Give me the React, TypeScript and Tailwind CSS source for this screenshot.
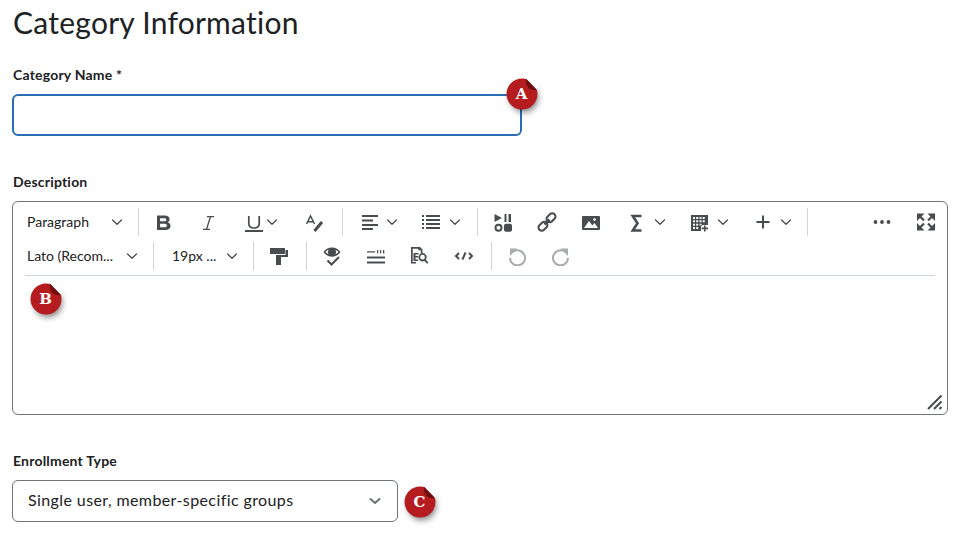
import React from "react";

const C = "#494c4e";
const G = "#a9acae";

function Chev({ className = "" }: { className?: string }) {
  return (
    <svg width="12" height="8" viewBox="0 0 12 8" className={"shrink-0 " + className} fill="none" stroke={C} strokeWidth="1.3" strokeLinecap="round" strokeLinejoin="round">
      <path d="M1.500 2 6 6.200 10.500 2" />
    </svg>
  );
}

function Sep({ className = "" }: { className?: string }) {
  return <div className={"w-px h-[28px] bg-[#cdd5dc] shrink-0 " + className} />;
}

function Ico({ children, className = "" }: { children: React.ReactNode; className?: string }) {
  return (
    <svg width="20" height="20" viewBox="0 0 20 20" className={"shrink-0 " + className} fill={C} stroke="none">
      {children}
    </svg>
  );
}

function Badge({ letter, className }: { letter: string; className: string }) {
  return (
    <div className={"absolute w-[32px] h-[32px] " + className}>
      <div className="absolute left-[4px] top-[6px] w-[28px] h-[28px] rounded-full bg-black/50 blur-[3px]" />
      <svg width="32" height="32" viewBox="0 0 32 32" className="absolute left-0 top-0">
        <circle cx="16" cy="16" r="15.500" fill="#b51c20" />
        <path d="M19.500 0H32v12.500L31 12 20 .8z" fill="#fff" />
        <path d="M20 .8 31 12c-3.500.6-7-.4-9-2.500S19.500 4 20 .8z" fill="#6f0d10" />
      </svg>
      <span className="absolute inset-0 flex items-center justify-center pr-[1px] text-white text-[15px] font-bold font-['DejaVu_Serif',serif] leading-none">{letter}</span>
    </div>
  );
}

export default function App() {
  return (
    <div className="relative w-[961px] h-[541px] overflow-hidden bg-white pl-[12px] font-['Lato',sans-serif] text-[#202122]">
      <h1 className="ml-[1px] pt-[2px] text-[30px] leading-[40px] font-normal tracking-[0.25px]">Category Information</h1>

      <label className="block ml-[1px] mt-[23px] text-[14px] leading-[20px] font-bold tracking-[0.2px]">Category Name *</label>
      <div className="mt-[9px] w-[510px] h-[42px] rounded-[6px] border-2 border-[#2a6db5] bg-white" />

      <label className="block ml-[1px] mt-[36px] text-[14px] leading-[20px] font-bold tracking-[0.2px]">Description</label>

      <div className="mt-[9px] w-[936px] h-[214px] rounded-[6px] border border-[#6e7477] bg-white flex flex-col">
        <div className="flex items-center h-[34px] mt-[3px] pl-[14px] shrink-0">
          <span className="text-[14px] w-[82px] pb-[2px]">Paragraph</span>
          <Chev className="ml-[2px]" />
          <Sep className="ml-[15px]" />
          <Ico className="ml-[15px]">
            <path fillRule="evenodd" d="M3 3.500h7.800c3 0 4.800 1.400 4.800 3.800 0 1.400-.8 2.500-1.900 3 1.700.5 2.800 1.800 2.800 3.600 0 2.700-2 4.100-5 4.100H3zm3.100 2.700v3h4.100c1.400 0 2.100-.5 2.100-1.500s-.7-1.500-2.100-1.500zm0 5.500v3.600h4.500c1.500 0 2.300-.7 2.300-1.800s-.8-1.800-2.300-1.800z" />
          </Ico>
          <svg width="20" height="20" viewBox="0 0 20 20" className="ml-[24px] shrink-0" fill="none" stroke={C} strokeWidth="1.300">
            <path d="M9 4.700h7M5 17.300h7M12.500 4.700 8.500 17.300" />
          </svg>
          <svg width="20" height="20" viewBox="0 0 20 20" className="ml-[26px] shrink-0" fill="none" stroke={C}>
            <path strokeWidth="1.700" d="M4.800 4v7.500c0 3 2 4.500 5.200 4.500s5.200-1.500 5.200-4.500V4" />
            <path strokeWidth="2" d="M1 19h18" />
          </svg>
          <Chev className="ml-[2px]" />
          <svg width="20" height="20" viewBox="0 0 20 20" className="ml-[26px] shrink-0" fill="none" stroke={C}>
            <path strokeWidth="1.500" d="M2.500 12 6.500 4l4 8M4 9.800h5" />
            <path strokeWidth="3" d="M10.500 19 18 10" />
          </svg>
          <Sep className="ml-[18px]" />
          <Ico className="ml-[17px]">
            <path d="M2 3h16v2H2zM2 7.500h11v2H2zM2 12h16v2H2zM2 16h11v2H2z" />
          </Ico>
          <Chev className="ml-[6px]" />
          <Ico className="ml-[23px]">
            <path d="M1 3h2v2H1zM1 7h2v2H1zM1 11h2v2H1zM1 15h2v2H1zM5 3h14v2H5zM5 7h14v2H5zM5 11h14v2H5zM5 15h14v2H5z" />
          </Ico>
          <Chev className="ml-[8px]" />
          <Sep className="ml-[16px]" />
          <Ico className="ml-[15px]">
            <path d="M1.500 2 9 6l-7.500 4zM11.500 2h2v8h-2zM15.500 2H18v8h-2.500z" />
            <path fillRule="evenodd" d="M5.500 11.700a4 4 0 1 1 0 8 4 4 0 0 1 0-8zm0 2a2 2 0 1 0 0 4 2 2 0 0 0 0-4z" />
            <rect x="11" y="11.700" width="8" height="8" rx="2" />
          </Ico>
          <svg width="20" height="20" viewBox="0 0 20 20" className="ml-[24px] shrink-0" fill="none" stroke={C} strokeWidth="2">
            <rect x="1" y="11" width="10" height="6.500" rx="3.250" transform="rotate(-45 6 14.250)" />
            <rect x="9" y="2.500" width="10" height="6.500" rx="3.250" transform="rotate(-45 14 5.750)" />
            <path d="M7.500 12.500l5-5" strokeWidth="2.500" />
          </svg>
          <Ico className="ml-[24px]">
            <path fillRule="evenodd" d="M2 4h16a1 1 0 0 1 1 1v12a1 1 0 0 1-1 1H2a1 1 0 0 1-1-1V5a1 1 0 0 1 1-1zm1 12h14l-3.500-5-2.200 2.500L8 9zm10.500-9.700a1.300 1.300 0 1 0 0 2.600 1.300 1.300 0 0 0 0-2.600z" />
          </Ico>
          <svg width="20" height="20" viewBox="0 0 20 20" className="ml-[25px] shrink-0" fill="none" stroke={C} strokeWidth="2.600">
            <path d="M15.500 4H6.800l4.700 7.200-4.700 7.300h8.700" />
          </svg>
          <Chev className="ml-[8px]" />
          <Ico className="ml-[23px]">
            <path fillRule="evenodd" d="M2 3h17v10h-6v1h-1v5H2zm2 2v2h2V5zm3.200 0v2h2V5zm3.300 0v2h2V5zm3.200 0v2h2V5zM4 8.300v2h2v-2zm3.200 0v2h2v-2zm3.300 0v2h2v-2zm3.200 0v2h2v-2zM4 11.700v2h2v-2zm3.200 0v2h2v-2zm3.300 0v1.600h2v-1.600zM4 15v2h2v-2zm3.200 0v2h2v-2z" />
            <path d="M15 13.500h1.600v2.100h2.400v1.600h-2.400v2.300H15v-2.300h-2.300v-1.600H15z" />
          </Ico>
          <Chev className="ml-[8px]" />
          <Ico className="ml-[24px]">
            <path d="M9 3.500h2V9h5.500v2H11v5.500H9V11H3.500V9H9z" />
          </Ico>
          <Chev className="ml-[7px]" />
          <Sep className="ml-[15px]" />
          <Ico className="ml-[64px]">
            <circle cx="3.500" cy="10" r="1.900" />
            <circle cx="10" cy="10" r="1.900" />
            <circle cx="16.500" cy="10" r="1.900" />
          </Ico>
          <svg width="20" height="20" viewBox="0 0 20 20" className="ml-[24px] shrink-0" fill={C} stroke={C} strokeWidth="2.200">
            <path stroke="none" d="M1 1.500h7.500L1 9zM19 1.500h-7.500L19 9zM1 18.500h7.500L1 11zM19 18.500h-7.500L19 11z" />
            <path d="M3 3.500l5 5M17 3.500l-5 5M3 16.500l5-5M17 16.500l-5-5" />
          </svg>
        </div>

        <div className="flex items-center h-[34px] pl-[14px] shrink-0">
          <span className="text-[14px] w-[90px] whitespace-nowrap pb-[2px]">Lato (Recom...</span>
          <Chev className="ml-[9px]" />
          <Sep className="ml-[15px]" />
          <span className="text-[14px] ml-[18px] w-[48px] whitespace-nowrap pb-[2px]">19px ...</span>
          <Chev className="ml-[6px]" />
          <Sep className="ml-[15px]" />
          <Ico className="ml-[15px]">
            <path d="M1 2h15v6H1zM16.500 4H19v7h-7v8H7v-10h9.500z" />
          </Ico>
          <Sep className="ml-[17px]" />
          <svg width="20" height="20" viewBox="0 0 20 20" className="ml-[15px] shrink-0" fill="none">
            <path fillRule="evenodd" fill={C} d="M10 1.500c3.700 0 6.800 1.900 8.500 4.500-1.700 2.800-4.800 4.700-8.500 4.700S3.200 8.800 1.500 6C3.200 3.400 6.300 1.500 10 1.500zM5 4.500C4.300 5 3.800 5.500 3.500 6c.8 1 2 1.900 3.300 2.300a3.500 3.500 0 0 1 0-4.600C6 3.900 5.500 4.200 5 4.500zm8.200-.8a3.500 3.500 0 0 1 0 4.600c1.300-.4 2.500-1.300 3.300-2.300-.8-1-2-1.900-3.300-2.300z" />
            <path stroke={C} strokeWidth="2" d="M5.500 14.500 9.500 18.500 17 11" />
          </svg>
          <Ico className="ml-[24px]">
            <path d="M1 5.300h8v1.300H1zM1 10.500h18v2H1zM1 15.500h18v2H1z" />
            <path d="M11 4h1.200v3.500H11zM14 4h1.200v3.500H14zM17 4h1.300v3.500H17z" />
          </Ico>
          <Ico className="ml-[22px]">
            <path d="M3 1h9l2.500 2.500v4h-1.700V4.200h-2.600V2.700H4.700v13.200H8V17.500H3z" />
            <path d="M5.500 7h5v1.500H7.500V10h2.500v1.500H7.500v2H10V15H5.500z" />
            <path fillRule="evenodd" d="M14.500 7a4.200 4.200 0 0 1 3.300 6.700l2.700 2.800-1.300 1.300-2.800-2.800A4.200 4.200 0 1 1 14.500 7zm0 1.800a2.400 2.400 0 1 0 0 4.800 2.400 2.400 0 0 0 0-4.800z" />
          </Ico>
          <svg width="20" height="20" viewBox="0 0 20 20" className="ml-[26px] shrink-0" fill="none" stroke={C} strokeWidth="2">
            <path d="M5 7 2 10l3 3M15 7l3 3-3 3M11.500 6.500 8.500 13.500" />
          </svg>
          <Sep className="ml-[17px]" />
          <svg width="20" height="20" viewBox="0 0 20 20" className="ml-[15px] shrink-0" fill="none" stroke={G} strokeWidth="2">
            <path d="M3 2.500h7.500L3 10z" fill={G} stroke="none" />
            <path d="M6.500 5.500A7.500 7.500 0 1 1 3 12" />
          </svg>
          <svg width="20" height="20" viewBox="0 0 20 20" className="ml-[24px] shrink-0" fill="none" stroke={G} strokeWidth="2">
            <path d="M17 2.500H9.500L17 10z" fill={G} stroke="none" />
            <path d="M13.500 5.500A7.500 7.500 0 1 0 17 12" />
          </svg>
        </div>

        <div className="mx-[12px] h-px bg-[#cdd5dc] mt-[2px] shrink-0" />

        <div className="relative flex-1 min-h-0">
          <svg width="16" height="16" viewBox="0 0 16 16" className="absolute right-[4px] bottom-[4px]" fill="none" stroke={C} strokeWidth="2">
            <path d="M1 15 14.500 1.500M7 15l7.500-7.500M12.500 15l2-2" />
          </svg>
        </div>
      </div>

      <label className="block ml-[1px] mt-[36px] text-[14px] leading-[20px] font-bold tracking-[0.2px]">Enrollment Type</label>
      <div className="mt-[9px] w-[386px] h-[42px] rounded-[6px] border border-[#6e7477] bg-white flex items-center justify-between pl-[15px] pr-[15px]">
        <span className="text-[16px] tracking-[0.4px] whitespace-nowrap pb-[2px]">Single user, member-specific groups</span>
        <svg width="14" height="8" viewBox="0 0 14 8" className="shrink-0" fill="none" stroke="#6e7477" strokeWidth="2" strokeLinecap="round" strokeLinejoin="round">
          <path d="M2.500 2 7 6l4.500-4" />
        </svg>
      </div>

      <Badge letter="A" className="left-[506px] top-[78px]" />
      <Badge letter="B" className="left-[30px] top-[283px]" />
      <Badge letter="C" className="left-[404px] top-[486px]" />
    </div>
  );
}
